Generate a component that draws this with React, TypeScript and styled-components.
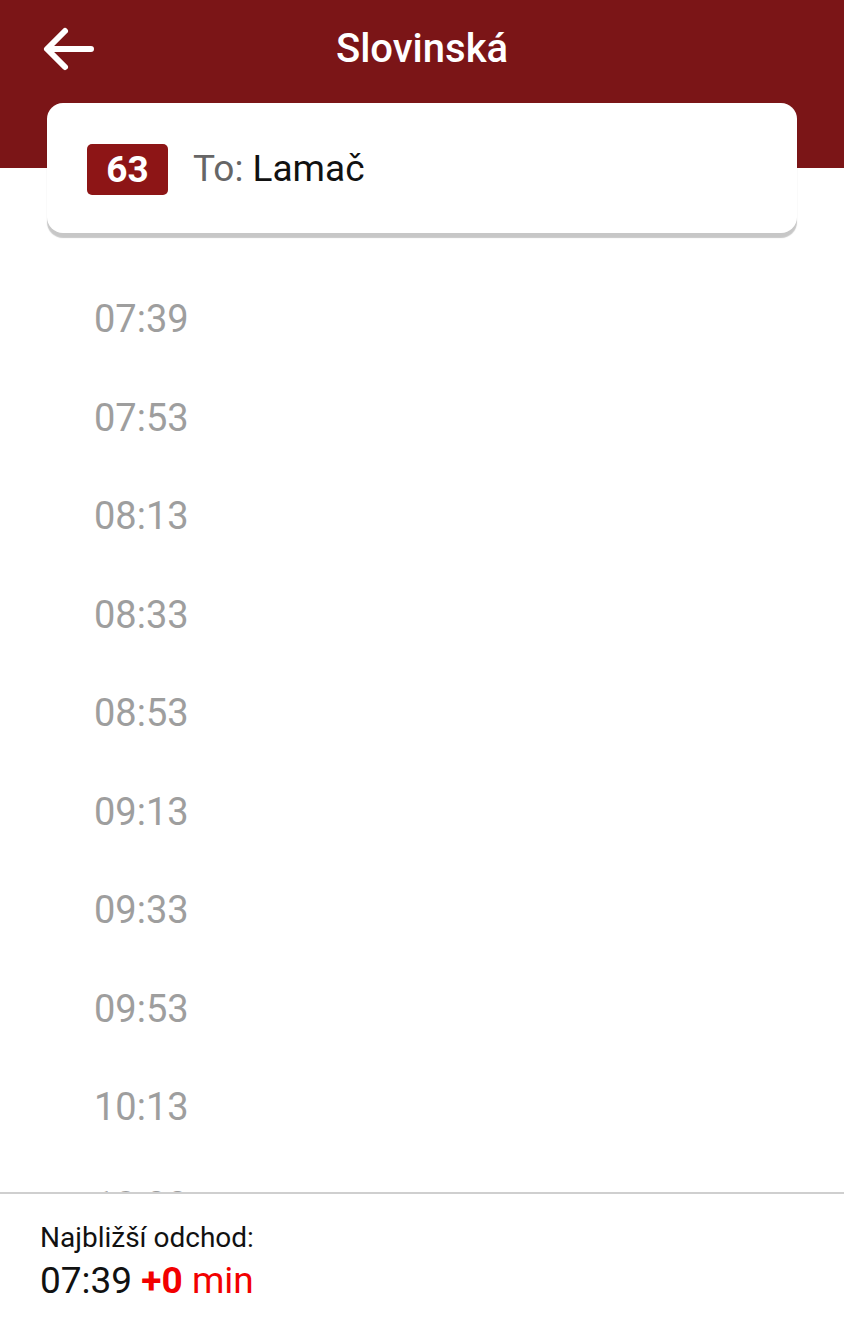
import React from "react";
import styled, { createGlobalStyle } from "styled-components";

const GlobalStyle = createGlobalStyle`
  html, body { margin: 0; padding: 0; background: #ffffff; }
  body { font-family: Roboto, "Noto Sans", Arial, sans-serif; }
  * { box-sizing: border-box; }
`;

const Screen = styled.div`
  width: 844px;
  height: 1328px;
  display: flex;
  flex-direction: column;
  background: #ffffff;
  overflow: hidden;
`;

const Top = styled.div`
  background: linear-gradient(#7b1517 0, #7b1517 168px, #ffffff 168px);
  display: flex;
  flex-direction: column;
`;

const AppBar = styled.div`
  height: 103px;
  display: grid;
  grid-template-columns: 120px 1fr 120px;
  align-items: center;
`;

const BackButton = styled.button`
  border: none;
  background: none;
  padding: 0 0 0 42px;
  margin: 0;
  height: 100%;
  display: flex;
  align-items: center;
  cursor: pointer;
  margin-top: -6px;
`;

const Title = styled.h1`
  margin: 0;
  margin-top: -6px;
  text-align: center;
  color: #ffffff;
  font-family: Roboto, sans-serif;
  font-weight: 500;
  font-size: 40px;
`;

const Card = styled.div`
  margin: 0 47px;
  height: 130px;
  background: #ffffff;
  border-radius: 16px;
  box-shadow: 0 5px 1px rgba(0, 0, 0, 0.22);
  display: flex;
  align-items: center;
  gap: 25px;
  padding: 0 0 0 40px;
`;

const Badge = styled.div`
  width: 81px;
  height: 51px;
  border-radius: 5px;
  background: #8d1516;
  color: #ffffff;
  font-family: Roboto, sans-serif;
  font-weight: 700;
  font-size: 37px;
  display: flex;
  align-items: center;
  justify-content: center;
  margin-top: 2px;
`;

const Destination = styled.div`
  font-family: Roboto, sans-serif;
  font-size: 37px;
  color: #111111;
`;

const Label = styled.span`
  color: #666666;
`;

const List = styled.div`
  flex: 1;
  overflow: hidden;
  padding-top: 37px;
  display: flex;
  flex-direction: column;
`;

const Row = styled.div`
  height: 98.5px;
  flex: none;
  display: flex;
  align-items: center;
  padding-left: 94px;
  font-family: Roboto, sans-serif;
  font-size: 38px;
  color: #9e9e9e;
`;

const Footer = styled.div`
  flex: none;
  height: 136px;
  border-top: 2px solid #cfcfcf;
  padding: 27px 0 0 40px;
  display: flex;
  flex-direction: column;
  gap: 5px;
  font-family: Roboto, sans-serif;
`;

const FooterLabel = styled.div`
  font-size: 28px;
  line-height: 33px;
  color: #111111;
`;

const FooterValue = styled.div`
  font-size: 37px;
  line-height: 44px;
  color: #111111;
`;

const Delay = styled.span`
  color: #f20000;
`;

const DelayNum = styled.b`
  font-weight: 700;
`;

const times = [
  "07:39",
  "07:53",
  "08:13",
  "08:33",
  "08:53",
  "09:13",
  "09:33",
  "09:53",
  "10:13",
  "10:33",
];

export default function App() {
  return (
    <>
      <GlobalStyle />
      <Screen>
        <Top>
          <AppBar>
            <BackButton aria-label="Back">
              <svg width="54" height="46" viewBox="0 0 54 46" fill="none">
                <path
                  d="M49 23H6M23 5L5 23L23 41"
                  stroke="#ffffff"
                  strokeWidth="6"
                  strokeLinecap="round"
                  strokeLinejoin="round"
                />
              </svg>
            </BackButton>
            <Title>Slovinská</Title>
            <div />
          </AppBar>
          <Card>
            <Badge>63</Badge>
            <Destination>
              <Label>To: </Label>Lamač
            </Destination>
          </Card>
        </Top>
        <List>
          {times.map((t) => (
            <Row key={t}>{t}</Row>
          ))}
        </List>
        <Footer>
          <FooterLabel>Najbližší odchod:</FooterLabel>
          <FooterValue>
            07:39{" "}
            <Delay>
              <DelayNum>+0</DelayNum> min
            </Delay>
          </FooterValue>
        </Footer>
      </Screen>
    </>
  );
}
